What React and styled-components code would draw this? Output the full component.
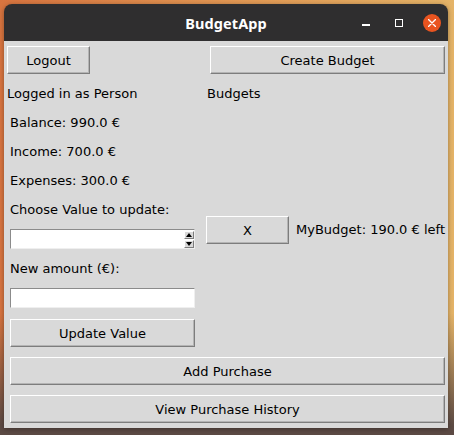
import React from 'react';
import styled, { createGlobalStyle } from 'styled-components';

const GlobalStyle = createGlobalStyle`
  html, body {
    margin: 0;
    padding: 0;
  }
  body {
    font-family: "DejaVu Sans", "Liberation Sans", sans-serif;
  }
`;

const App = () => {
  return (
    <>
      <GlobalStyle />
      <Desktop>
        <Window>
          <TitleBar>
            <span />
            <Title>BudgetApp</Title>
            <Controls>
              <ControlSlot>
                <MinimizeIcon />
              </ControlSlot>
              <ControlSlot>
                <MaximizeIcon />
              </ControlSlot>
              <ControlSlot>
                <CloseButton>
                  <svg width="8" height="8" viewBox="0 0 8 8">
                    <path d="M0.5 0.5 L7.5 7.5 M7.5 0.5 L0.5 7.5" stroke="#fff" strokeWidth="1.4" strokeLinecap="round" />
                  </svg>
                </CloseButton>
              </ControlSlot>
            </Controls>
          </TitleBar>

          <Body>
            <Columns>
              <Column>
                <TkButton $width="83px">Logout</TkButton>
                <Label $mt="5px">Logged in as Person</Label>
                <Label $ml="3px">Balance: 990.0 €</Label>
                <Label $ml="3px">Income: 700.0 €</Label>
                <Label $ml="3px">Expenses: 300.0 €</Label>
                <Label $ml="3px">Choose Value to update:</Label>
                <Spinbox>
                  <SpinInput />
                  <SpinArrows>
                    <ArrowButton><Triangle $dir="up" /></ArrowButton>
                    <ArrowButton><Triangle $dir="down" /></ArrowButton>
                  </SpinArrows>
                </Spinbox>
                <Label $ml="3px" $mt="5px">New amount (€):</Label>
                <Entry />
                <TkButton $width="185px" $ml="3px" $mt="11px">Update Value</TkButton>
              </Column>

              <Column>
                <TkButton $width="235px" $ml="4px">Create Budget</TkButton>
                <Label $mt="5px" $ml="1px">Budgets</Label>
                <BudgetRow>
                  <TkButton $width="83px">X</TkButton>
                  <BudgetText>MyBudget: 190.0 € left</BudgetText>
                </BudgetRow>
              </Column>
            </Columns>

            <TkButton $width="435px" $ml="3px" $mt="10px">Add Purchase</TkButton>
            <TkButton $width="435px" $ml="3px" $mt="10px">View Purchase History</TkButton>
          </Body>
        </Window>
      </Desktop>
    </>
  );
};

export default App;

const Desktop = styled.div`
  width: 454px;
  height: 435px;
  box-sizing: border-box;
  padding: 4px 0 0 4px;
  overflow: hidden;
  background:
    linear-gradient(180deg, rgba(90, 72, 66, 0) 72%, #5c4a44 98%),
    linear-gradient(90deg, #d8743f 0%, #e39a55 55%, #e5b468 100%);
`;

const Window = styled.div`
  width: 444px;
  height: 424px;
  display: flex;
  flex-direction: column;
  border-radius: 8px 8px 0 0;
  overflow: hidden;
  box-shadow: 0 1px 5px rgba(0, 0, 0, 0.35);
`;

const TitleBar = styled.div`
  height: 37px;
  flex-shrink: 0;
  display: grid;
  grid-template-columns: 1fr auto 1fr;
  align-items: center;
  background: #2f2e2f;
  color: #ffffff;
`;

const Title = styled.div`
  font-family: "Noto Sans", "DejaVu Sans", sans-serif;
  font-weight: bold;
  font-size: 14.5px;
  letter-spacing: 0.1px;
`;

const Controls = styled.div`
  justify-self: end;
  display: flex;
  align-items: center;
  height: 100%;
`;

const ControlSlot = styled.div`
  width: 33px;
  height: 100%;
  display: flex;
  align-items: center;
  justify-content: center;
`;

const MinimizeIcon = styled.div`
  width: 8px;
  height: 1.5px;
  margin-top: 5px;
  background: #ffffff;
`;

const MaximizeIcon = styled.div`
  width: 8px;
  height: 8px;
  box-sizing: border-box;
  border: 1.5px solid #ffffff;
`;

const CloseButton = styled.div`
  width: 18px;
  height: 18px;
  border-radius: 50%;
  background: #e95420;
  display: flex;
  align-items: center;
  justify-content: center;
`;

const Body = styled.div`
  flex: 1;
  box-sizing: border-box;
  padding: 5px 3px 5px 3px;
  display: flex;
  flex-direction: column;
  align-items: flex-start;
  background: #d9d9d9;
  color: #000000;
  font-size: 13px;
`;

const Columns = styled.div`
  display: grid;
  grid-template-columns: 199px 1fr;
  align-items: start;
  width: 100%;
`;

const Column = styled.div`
  display: flex;
  flex-direction: column;
  align-items: flex-start;
`;

const TkButton = styled.button`
  width: ${(p) => p.$width || 'auto'};
  height: 28px;
  margin: ${(p) => p.$mt || '0'} 0 0 ${(p) => p.$ml || '0'};
  padding: 0;
  box-sizing: border-box;
  background: #d9d9d9;
  border: 1px solid;
  border-color: #ffffff #7d7d7d #7d7d7d #ffffff;
  box-shadow: inset -1px -1px 0 #b4b4b4;
  font-family: "DejaVu Sans", sans-serif;
  font-size: 13px;
  color: #000000;
  flex-shrink: 0;
`;

const Label = styled.div`
  height: 29px;
  line-height: 29px;
  margin: ${(p) => p.$mt || '0'} 0 0 ${(p) => p.$ml || '0'};
  white-space: nowrap;
`;

const Spinbox = styled.div`
  width: 185px;
  height: 20px;
  margin: 5px 0 0 3px;
  box-sizing: border-box;
  display: flex;
  background: #ffffff;
  border: 1px solid;
  border-color: #8b8b8b #efefef #efefef #8b8b8b;
`;

const SpinInput = styled.input`
  flex: 1;
  min-width: 0;
  border: none;
  outline: none;
  background: transparent;
  padding: 0 2px;
  font-family: "DejaVu Sans", sans-serif;
  font-size: 13px;
`;

const SpinArrows = styled.div`
  width: 10px;
  display: flex;
  flex-direction: column;
  justify-content: center;
  gap: 1px;
`;

const ArrowButton = styled.div`
  width: 10px;
  height: 8px;
  box-sizing: border-box;
  background: #d9d9d9;
  border: 1px solid;
  border-color: #ffffff #7d7d7d #7d7d7d #ffffff;
  display: flex;
  align-items: center;
  justify-content: center;
`;

const Triangle = styled.div`
  width: 0;
  height: 0;
  border-left: 3px solid transparent;
  border-right: 3px solid transparent;
  ${(p) => (p.$dir === 'up' ? 'border-bottom: 4px solid #000;' : 'border-top: 4px solid #000;')}
`;

const Entry = styled.input`
  width: 185px;
  height: 20px;
  margin: 5px 0 0 3px;
  box-sizing: border-box;
  background: #ffffff;
  border: 1px solid;
  border-color: #8b8b8b #efefef #efefef #8b8b8b;
  outline: none;
  padding: 0 2px;
  font-family: "DejaVu Sans", sans-serif;
  font-size: 13px;
`;

const BudgetRow = styled.div`
  display: flex;
  align-items: center;
  gap: 7px;
  margin-top: 108px;
`;

const BudgetText = styled.span`
  line-height: 28px;
  white-space: nowrap;
`;
